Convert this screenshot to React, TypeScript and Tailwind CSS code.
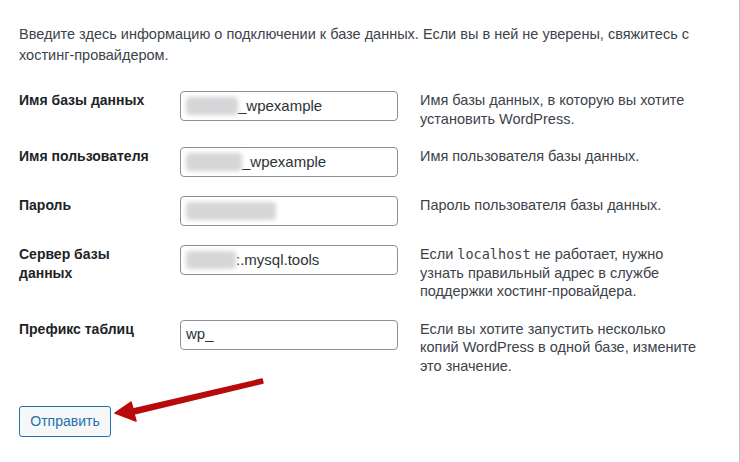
import React from 'react';

type Row = {
  label: React.ReactNode;
  value: React.ReactNode;
  desc: React.ReactNode;
};

const Blur: React.FC<{ w: number }> = ({ w }) => (
  <span
    className="inline-block h-[18px] rounded-sm bg-[#d6d6d8] blur-[2px] align-middle"
    style={{ width: w }}
  />
);

const rows: Row[] = [
  {
    label: 'Имя базы данных',
    value: (
      <>
        <Blur w={52} />
        <span>_wpexample</span>
      </>
    ),
    desc: 'Имя базы данных, в которую вы хотите установить WordPress.',
  },
  {
    label: 'Имя пользователя',
    value: (
      <>
        <Blur w={56} />
        <span>_wpexample</span>
      </>
    ),
    desc: 'Имя пользователя базы данных.',
  },
  {
    label: 'Пароль',
    value: <Blur w={90} />,
    desc: 'Пароль пользователя базы данных.',
  },
  {
    label: 'Сервер базы данных',
    value: (
      <>
        <Blur w={50} />
        <span>:.mysql.tools</span>
      </>
    ),
    desc: (
      <>
        Если <code className="font-['DejaVu_Sans_Mono',monospace] text-[13.5px]">localhost</code> не
        работает, нужно узнать правильный адрес в службе поддержки хостинг-провайдера.
      </>
    ),
  },
  {
    label: 'Префикс таблиц',
    value: <span>wp_</span>,
    desc: 'Если вы хотите запустить несколько копий WordPress в одной базе, измените это значение.',
  },
];

const Arrow: React.FC = () => (
  <svg
    className="pointer-events-none absolute left-0 top-0"
    width="740"
    height="462"
    viewBox="0 0 740 462"
  >
    <polygon
      points="115,413 131,402 133,409 262,379 263,383 134,414 136,421"
      fill="#b80b0b"
      stroke="#b80b0b"
      strokeWidth="1.5"
      strokeLinejoin="round"
    />
  </svg>
);

export default function App() {
  return (
    <div className="relative h-[462px] w-[740px] overflow-hidden bg-white font-['Liberation_Sans',Arial,sans-serif] text-[14.5px] text-[#3c434a]">
      <div className="h-full w-[740px] border-r border-[#c3c4c7] pl-[19px] pt-[24px]">
        {/* Intro */}
        <p className="w-[700px] leading-[21px]">
          Введите здесь информацию о подключении к базе данных. Если вы в ней не уверены, свяжитесь с
          хостинг-провайдером.
        </p>

        {/* Form rows */}
        <div className="mt-[25px] flex flex-col gap-[19px]">
          {rows.map((r, i) => (
            <div key={i} className="flex items-start">
              <div className="w-[134px] text-[14px] font-bold leading-[19px] text-[#1d2327]">{r.label}</div>
              <div className="ml-[27px] flex h-[30px] w-[218px] items-center rounded-[4px] border border-[#8c8f94] bg-white px-[5px] text-[15px] text-[#2c3338]">
                {r.value}
              </div>
              <div className="ml-[22px] w-[282px] leading-[18.5px]">{r.desc}</div>
            </div>
          ))}
        </div>

        {/* Submit */}
        <button className="mt-[31px] h-[31px] w-[92px] rounded-[3px] border border-[#2271b1] bg-[#f6f7f7] text-[14px] text-[#2271b1]">
          Отправить
        </button>
      </div>
      <Arrow />
    </div>
  );
}
